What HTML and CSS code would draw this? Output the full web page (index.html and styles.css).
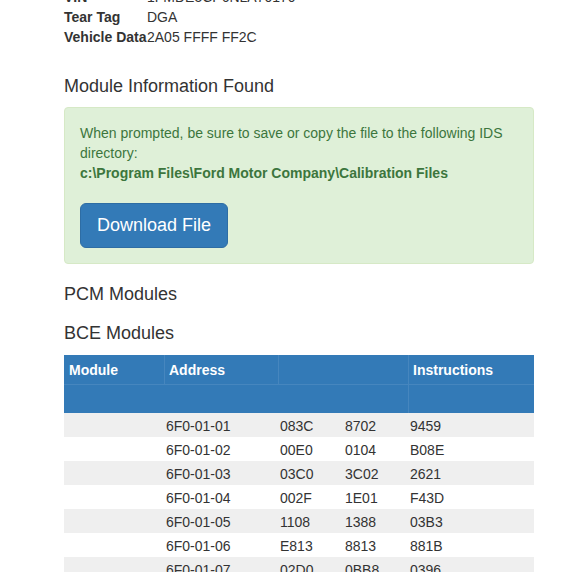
FILE: index.html
```html
<!DOCTYPE html>
<html>
<head>
  <meta http-equiv="content-type" content="text/html; charset=UTF-8">
  <title>Module Information</title>
  <link rel="stylesheet" href="styles.css">
</head>
<body>
<div class="page">
    <div class="vehicle">
        <span class="label">VIN</span><span class="value">1FMDE5CP6NLA70170</span>
        <span class="label">Tear Tag</span><span class="value">DGA</span>
        <span class="label">Vehicle Data</span><span class="value">2A05 FFFF FF2C</span>
    </div>

    <h4 class="found">Module Information Found</h4>
    <div class="alert">
        <p>When prompted, be sure to save or copy the file to the following IDS directory:</p>
        <p class="path">c:\Program Files\Ford Motor Company\Calibration Files</p>
        <button class="btn" type="button">Download File</button>
    </div>

    <h4 class="pcm">PCM Modules</h4>
    <h4 class="bce">BCE Modules</h4>

    <table class="modules">
        <colgroup>
            <col style="width: 100px">
            <col style="width: 114px">
            <col style="width: 65px">
            <col style="width: 65px">
            <col style="width: 126px">
        </colgroup>
        <thead>
            <tr class="first">
                <th>Module</th>
                <th class="sep">Address</th>
                <th class="sep" colspan="2"></th>
                <th class="sep">Instructions</th>
            </tr>
            <tr class="second">
                <th colspan="4"></th>
                <th class="sep"></th>
            </tr>
        </thead>
        <tbody>
            <tr><td></td><td>6F0-01-01</td><td>083C</td><td>8702</td><td>9459</td></tr>
            <tr><td></td><td>6F0-01-02</td><td>00E0</td><td>0104</td><td>B08E</td></tr>
            <tr><td></td><td>6F0-01-03</td><td>03C0</td><td>3C02</td><td>2621</td></tr>
            <tr><td></td><td>6F0-01-04</td><td>002F</td><td>1E01</td><td>F43D</td></tr>
            <tr><td></td><td>6F0-01-05</td><td>1108</td><td>1388</td><td>03B3</td></tr>
            <tr><td></td><td>6F0-01-06</td><td>E813</td><td>8813</td><td>881B</td></tr>
            <tr><td></td><td>6F0-01-07</td><td>02D0</td><td>0BB8</td><td>0396</td></tr>
        </tbody>
    </table>
</div>
</body>
</html>
```

FILE: styles.css
```css
* {
    margin: 0;
    padding: 0;
    box-sizing: border-box;
}
html, body {
    overflow: hidden;
}
body {
    background-color: #FFF;
    color: #333;
    font-family: "Liberation Sans", Arial, sans-serif;
    font-size: 14px;
    line-height: 20px;
}
.page {
    width: 470px;
    margin: -13px 0 0 64px;
}

/* vehicle summary */
.vehicle {
    display: grid;
    grid-template-columns: 83px 1fr;
}
.vehicle .label {
    font-weight: bold;
    white-space: nowrap;
}

h4 {
    font-size: 18px;
    font-weight: 500;
    line-height: 20px;
}
.found {
    margin: 29px 0 11px;
}
.pcm {
    margin-top: 20px;
}
.bce {
    margin: 19px 0 12px;
}

/* green notice */
.alert {
    padding: 15px;
    background-color: #DFF0D8;
    border: 1px solid #D6E9C6;
    border-radius: 4px;
    color: #3C763D;
}
.alert .path {
    font-weight: bold;
}
.btn {
    display: inline-block;
    margin-top: 20px;
    padding: 10px 16px;
    font-family: inherit;
    font-size: 18px;
    line-height: 23px;
    color: #FFF;
    background-color: #337AB7;
    border: 1px solid #2E6DA4;
    border-radius: 6px;
    cursor: pointer;
}

/* module table */
.modules {
    width: 470px;
    table-layout: fixed;
    border-collapse: separate;
    border-spacing: 0;
}
.modules thead th {
    background-color: #337AB7;
    color: #FFF;
    text-align: left;
    font-weight: bold;
    padding: 5px 5px;
}
.modules .first th {
    height: 30px;
    padding-bottom: 4px;
    border-bottom: 1px solid #4686BE;
}
.modules .second th {
    height: 28px;
}
.modules th.sep {
    padding-left: 4px;
    border-left: 1px solid #4686BE;
}
.modules td {
    height: 24px;
    padding: 3px 2px 1px;
    white-space: nowrap;
}
.modules tbody tr:nth-child(odd) td {
    background-color: #EFEFEF;
}
```
